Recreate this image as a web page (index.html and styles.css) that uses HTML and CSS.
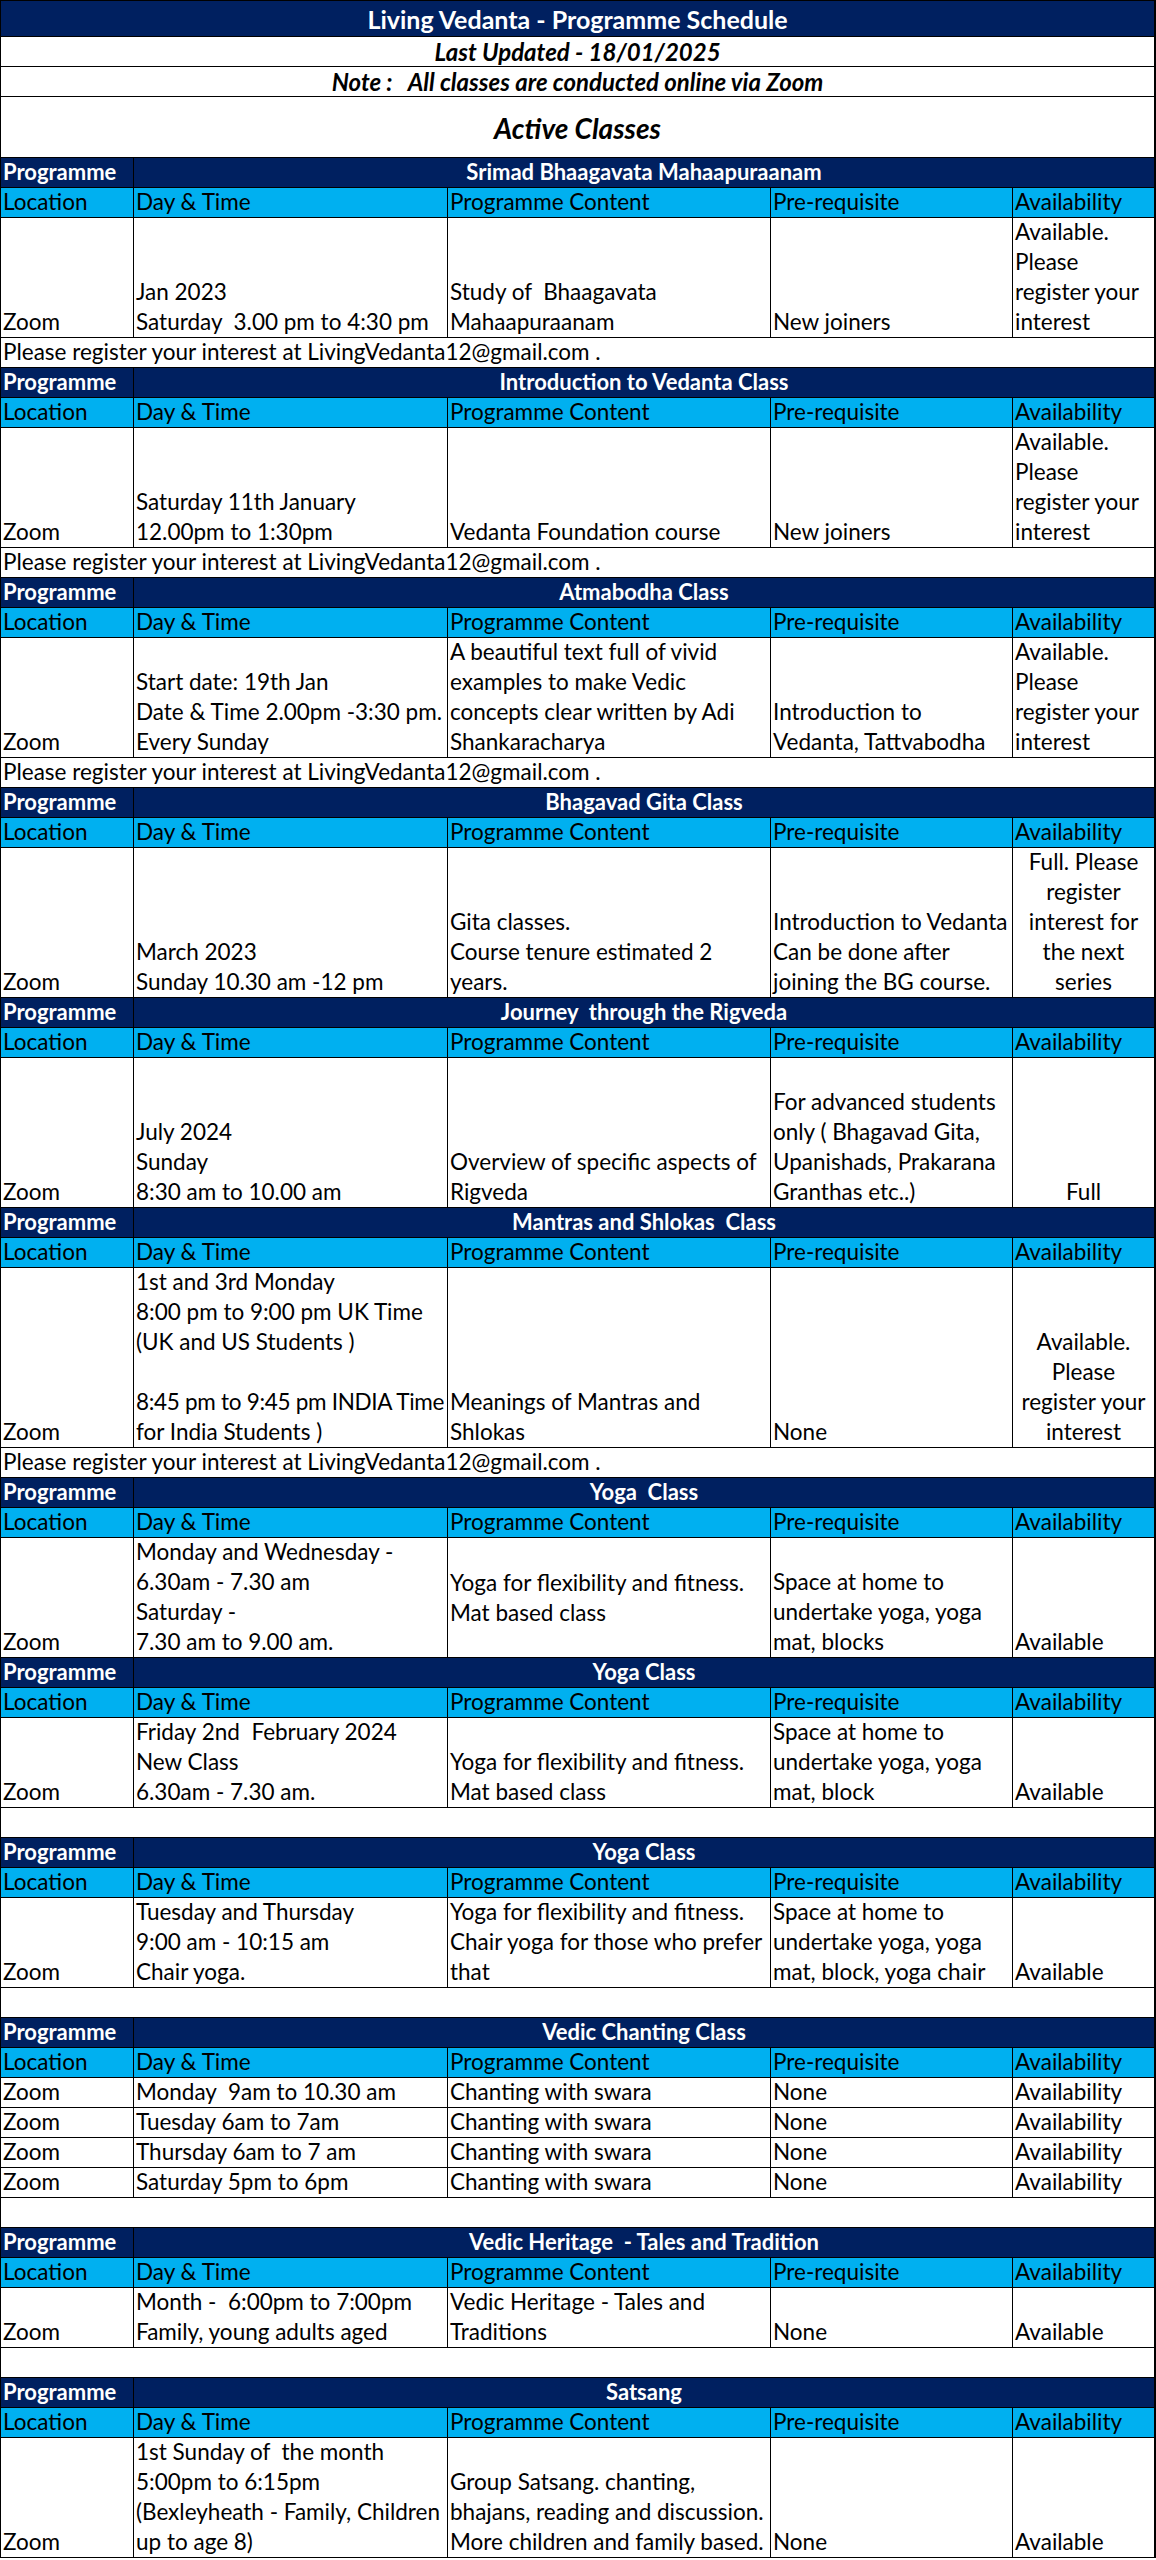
FILE: index.html
```html
<!DOCTYPE html>
<html lang="en">
<head>
<meta charset="utf-8">
<title>Living Vedanta - Programme Schedule</title>
<link rel="stylesheet" href="styles.css">
</head>
<body>
<div class="sheet">
  <div class="banner title">Living Vedanta - Programme Schedule</div>
  <div class="banner sub">Last Updated - 18/01/2025</div>
  <div class="banner sub">Note :   All classes are conducted online via Zoom</div>
  <div class="banner active">Active Classes</div>

  <div class="row navy h1"><div class="c b"><p>Programme</p></div><div class="c b span ctr"><p>Srimad Bhaagavata Mahaapuraanam</p></div></div>
  <div class="row blue h1"><div class="c"><p>Location</p></div><div class="c"><p>Day &amp; Time</p></div><div class="c"><p>Programme Content</p></div><div class="c"><p>Pre-requisite</p></div><div class="c"><p>Availability</p></div></div>
  <div class="row h4"><div class="c"><p>Zoom</p></div><div class="c"><p>Jan 2023<br>Saturday  3.00 pm to 4:30 pm</p></div><div class="c"><p>Study of  Bhaagavata<br>Mahaapuraanam</p></div><div class="c"><p>New joiners</p></div><div class="c"><p>Available.<br>Please<br>register your<br>interest</p></div></div>
  <div class="row h1"><div class="c span-all"><p>Please register your interest at LivingVedanta12@gmail.com .</p></div></div>

  <div class="row navy h1"><div class="c b"><p>Programme</p></div><div class="c b span ctr"><p>Introduction to Vedanta Class</p></div></div>
  <div class="row blue h1"><div class="c"><p>Location</p></div><div class="c"><p>Day &amp; Time</p></div><div class="c"><p>Programme Content</p></div><div class="c"><p>Pre-requisite</p></div><div class="c"><p>Availability</p></div></div>
  <div class="row h4"><div class="c"><p>Zoom</p></div><div class="c"><p>Saturday 11th January<br>12.00pm to 1:30pm</p></div><div class="c"><p>Vedanta Foundation course</p></div><div class="c"><p>New joiners</p></div><div class="c"><p>Available.<br>Please<br>register your<br>interest</p></div></div>
  <div class="row h1"><div class="c span-all"><p>Please register your interest at LivingVedanta12@gmail.com .</p></div></div>

  <div class="row navy h1"><div class="c b"><p>Programme</p></div><div class="c b span ctr"><p>Atmabodha Class</p></div></div>
  <div class="row blue h1"><div class="c"><p>Location</p></div><div class="c"><p>Day &amp; Time</p></div><div class="c"><p>Programme Content</p></div><div class="c"><p>Pre-requisite</p></div><div class="c"><p>Availability</p></div></div>
  <div class="row h4"><div class="c"><p>Zoom</p></div><div class="c"><p>Start date: 19th Jan<br>Date &amp; Time 2.00pm -3:30 pm.<br>Every Sunday</p></div><div class="c"><p>A beautiful text full of vivid<br>examples to make Vedic<br>concepts clear written by Adi<br>Shankaracharya</p></div><div class="c"><p>Introduction to<br>Vedanta, Tattvabodha</p></div><div class="c"><p>Available.<br>Please<br>register your<br>interest</p></div></div>
  <div class="row h1"><div class="c span-all"><p>Please register your interest at LivingVedanta12@gmail.com .</p></div></div>

  <div class="row navy h1"><div class="c b"><p>Programme</p></div><div class="c b span ctr"><p>Bhagavad Gita Class</p></div></div>
  <div class="row blue h1"><div class="c"><p>Location</p></div><div class="c"><p>Day &amp; Time</p></div><div class="c"><p>Programme Content</p></div><div class="c"><p>Pre-requisite</p></div><div class="c"><p>Availability</p></div></div>
  <div class="row h5"><div class="c"><p>Zoom</p></div><div class="c"><p>March 2023<br>Sunday 10.30 am -12 pm</p></div><div class="c"><p>Gita classes.<br>Course tenure estimated 2<br>years.</p></div><div class="c"><p>Introduction to Vedanta<br>Can be done after<br>joining the BG course.</p></div><div class="c ctr"><p>Full. Please<br>register<br>interest for<br>the next<br>series</p></div></div>

  <div class="row navy h1"><div class="c b"><p>Programme</p></div><div class="c b span ctr"><p>Journey  through the Rigveda</p></div></div>
  <div class="row blue h1"><div class="c"><p>Location</p></div><div class="c"><p>Day &amp; Time</p></div><div class="c"><p>Programme Content</p></div><div class="c"><p>Pre-requisite</p></div><div class="c"><p>Availability</p></div></div>
  <div class="row h5"><div class="c"><p>Zoom</p></div><div class="c"><p>July 2024<br>Sunday<br>8:30 am to 10.00 am</p></div><div class="c"><p>Overview of specific aspects of<br>Rigveda</p></div><div class="c"><p>For advanced students<br>only ( Bhagavad Gita,<br>Upanishads, Prakarana<br>Granthas etc..)</p></div><div class="c ctr"><p>Full</p></div></div>

  <div class="row navy h1"><div class="c b"><p>Programme</p></div><div class="c b span ctr"><p>Mantras and Shlokas  Class</p></div></div>
  <div class="row blue h1"><div class="c"><p>Location</p></div><div class="c"><p>Day &amp; Time</p></div><div class="c"><p>Programme Content</p></div><div class="c"><p>Pre-requisite</p></div><div class="c"><p>Availability</p></div></div>
  <div class="row h6"><div class="c"><p>Zoom</p></div><div class="c"><p>1st and 3rd Monday<br>8:00 pm to 9:00 pm UK Time<br>(UK and US Students )<br> <br><span class="tight">8:45 pm to 9:45 pm INDIA Time</span><br>for India Students )</p></div><div class="c"><p>Meanings of Mantras and<br>Shlokas</p></div><div class="c"><p>None</p></div><div class="c ctr"><p>Available.<br>Please<br>register your<br>interest</p></div></div>
  <div class="row h1"><div class="c span-all"><p>Please register your interest at LivingVedanta12@gmail.com .</p></div></div>

  <div class="row navy h1"><div class="c b"><p>Programme</p></div><div class="c b span ctr"><p>Yoga  Class</p></div></div>
  <div class="row blue h1"><div class="c"><p>Location</p></div><div class="c"><p>Day &amp; Time</p></div><div class="c"><p>Programme Content</p></div><div class="c"><p>Pre-requisite</p></div><div class="c"><p>Availability</p></div></div>
  <div class="row h4"><div class="c"><p>Zoom</p></div><div class="c"><p>Monday and Wednesday -<br>6.30am - 7.30 am<br>Saturday -<br>7.30 am to 9.00 am.</p></div><div class="c mid"><p>Yoga for flexibility and fitness.<br>Mat based class</p></div><div class="c"><p>Space at home to<br>undertake yoga, yoga<br>mat, blocks</p></div><div class="c"><p>Available</p></div></div>

  <div class="row navy h1"><div class="c b"><p>Programme</p></div><div class="c b span ctr"><p>Yoga Class</p></div></div>
  <div class="row blue h1"><div class="c"><p>Location</p></div><div class="c"><p>Day &amp; Time</p></div><div class="c"><p>Programme Content</p></div><div class="c"><p>Pre-requisite</p></div><div class="c"><p>Availability</p></div></div>
  <div class="row h3"><div class="c"><p>Zoom</p></div><div class="c"><p>Friday 2nd  February 2024<br>New Class<br>6.30am - 7.30 am.</p></div><div class="c"><p>Yoga for flexibility and fitness.<br>Mat based class</p></div><div class="c"><p>Space at home to<br>undertake yoga, yoga<br>mat, block</p></div><div class="c"><p>Available</p></div></div>
  <div class="row h1"><div class="c span-all"><p> </p></div></div>

  <div class="row navy h1"><div class="c b"><p>Programme</p></div><div class="c b span ctr"><p>Yoga Class</p></div></div>
  <div class="row blue h1"><div class="c"><p>Location</p></div><div class="c"><p>Day &amp; Time</p></div><div class="c"><p>Programme Content</p></div><div class="c"><p>Pre-requisite</p></div><div class="c"><p>Availability</p></div></div>
  <div class="row h3"><div class="c"><p>Zoom</p></div><div class="c"><p>Tuesday and Thursday<br>9:00 am - 10:15 am<br>Chair yoga.</p></div><div class="c"><p>Yoga for flexibility and fitness.<br>Chair yoga for those who prefer<br>that</p></div><div class="c"><p>Space at home to<br>undertake yoga, yoga<br>mat, block, yoga chair</p></div><div class="c"><p>Available</p></div></div>
  <div class="row h1"><div class="c span-all"><p> </p></div></div>

  <div class="row navy h1"><div class="c b"><p>Programme</p></div><div class="c b span ctr"><p>Vedic Chanting Class</p></div></div>
  <div class="row blue h1"><div class="c"><p>Location</p></div><div class="c"><p>Day &amp; Time</p></div><div class="c"><p>Programme Content</p></div><div class="c"><p>Pre-requisite</p></div><div class="c"><p>Availability</p></div></div>
  <div class="row h1"><div class="c"><p>Zoom</p></div><div class="c"><p>Monday  9am to 10.30 am</p></div><div class="c"><p>Chanting with swara</p></div><div class="c"><p>None</p></div><div class="c"><p>Availability</p></div></div>
  <div class="row h1"><div class="c"><p>Zoom</p></div><div class="c"><p>Tuesday 6am to 7am</p></div><div class="c"><p>Chanting with swara</p></div><div class="c"><p>None</p></div><div class="c"><p>Availability</p></div></div>
  <div class="row h1"><div class="c"><p>Zoom</p></div><div class="c"><p>Thursday 6am to 7 am</p></div><div class="c"><p>Chanting with swara</p></div><div class="c"><p>None</p></div><div class="c"><p>Availability</p></div></div>
  <div class="row h1"><div class="c"><p>Zoom</p></div><div class="c"><p>Saturday 5pm to 6pm</p></div><div class="c"><p>Chanting with swara</p></div><div class="c"><p>None</p></div><div class="c"><p>Availability</p></div></div>
  <div class="row h1"><div class="c span-all"><p> </p></div></div>

  <div class="row navy h1"><div class="c b"><p>Programme</p></div><div class="c b span ctr"><p>Vedic Heritage  - Tales and Tradition</p></div></div>
  <div class="row blue h1"><div class="c"><p>Location</p></div><div class="c"><p>Day &amp; Time</p></div><div class="c"><p>Programme Content</p></div><div class="c"><p>Pre-requisite</p></div><div class="c"><p>Availability</p></div></div>
  <div class="row h2"><div class="c"><p>Zoom</p></div><div class="c"><p>Month -  6:00pm to 7:00pm<br>Family, young adults aged</p></div><div class="c"><p>Vedic Heritage - Tales and<br>Traditions</p></div><div class="c"><p>None</p></div><div class="c"><p>Available</p></div></div>
  <div class="row h1"><div class="c span-all"><p> </p></div></div>

  <div class="row navy h1"><div class="c b"><p>Programme</p></div><div class="c b span ctr"><p>Satsang</p></div></div>
  <div class="row blue h1"><div class="c"><p>Location</p></div><div class="c"><p>Day &amp; Time</p></div><div class="c"><p>Programme Content</p></div><div class="c"><p>Pre-requisite</p></div><div class="c"><p>Availability</p></div></div>
  <div class="row h4"><div class="c"><p>Zoom</p></div><div class="c"><p>1st Sunday of  the month<br>5:00pm to 6:15pm<br>(Bexleyheath - Family, Children<br>up to age 8)</p></div><div class="c"><p>Group Satsang. chanting,<br>bhajans, reading and discussion.<br>More children and family based.</p></div><div class="c"><p>None</p></div><div class="c"><p>Available</p></div></div>
</div>
</body>
</html>
```

FILE: styles.css
```css
html, body {
  margin: 0;
  padding: 0;
  background: #ffffff;
}

body {
  font-family: Lato, "Open Sans", "Liberation Sans", sans-serif;
  font-size: 22.5px;
  color: #000000;
}

.sheet {
  width: 1156px;
  box-sizing: border-box;
  border-top: 1px solid #000;
  border-left: 1px solid #000;
  border-right: 2px solid #000;
}

.banner {
  box-sizing: border-box;
  border-bottom: 1px solid #000;
  display: flex;
  align-items: center;
  justify-content: center;
  white-space: pre;
}

.title {
  height: 36px;
  background: #002060;
  color: #ffffff;
  font-weight: 700;
  font-size: 25px;
  padding-top: 1px;
}

.sub {
  height: 30px;
  font-weight: 700;
  font-style: italic;
  font-size: 24px;
}

.active {
  height: 61px;
  font-weight: 700;
  font-style: italic;
  font-size: 28px;
  padding-top: 2px;
}

.row {
  display: grid;
  grid-template-columns: 133px 314px 323px 242px 141px;
  grid-auto-rows: minmax(0, 1fr);
  box-sizing: border-box;
  border-bottom: 1px solid #000;
}

.h1 { height: 30px; }
.h2 { height: 60px; }
.h3 { height: 90px; }
.h4 { height: 120px; }
.h5 { height: 150px; }
.h6 { height: 180px; }

.navy {
  background: #002060;
  color: #ffffff;
}

.blue {
  background: #00b0f0;
}

.c {
  box-sizing: border-box;
  border-right: 1px solid #000;
  padding: 0 2px;
  display: flex;
  flex-direction: column;
  justify-content: flex-end;
  min-height: 0;
  white-space: pre;
}

.c:last-child {
  border-right: none;
}

.c p {
  margin: 0;
  line-height: 30px;
}

.tight {
  letter-spacing: -0.3px;
}

.b {
  font-weight: 700;
  font-size: 22px;
}

.span {
  grid-column: 2 / -1;
}

.span-all {
  grid-column: 1 / -1;
}

.ctr {
  text-align: center;
}

.mid {
  justify-content: center;
}
```
